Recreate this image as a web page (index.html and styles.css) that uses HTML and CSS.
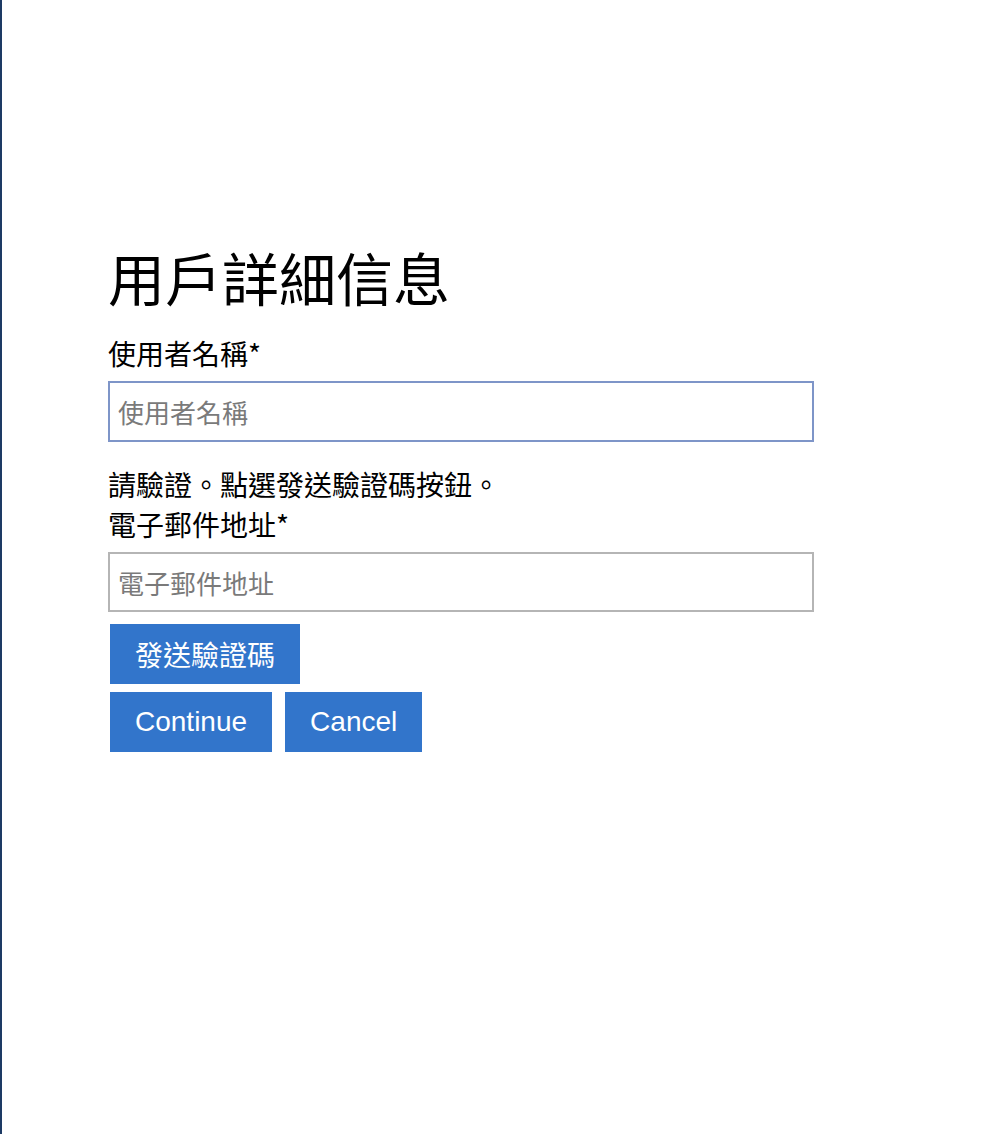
FILE: index.html
```html
<!DOCTYPE html>
<html lang="zh-Hant">
<head>
    <meta charset="UTF-8">
    <meta name="viewport" content="width=device-width, initial-scale=1.0">
    <title>用戶詳細信息</title>
    <link rel="stylesheet" href="styles.css">
</head>
<body>
    <div class="page">
        <form class="user-details" onsubmit="return false;">
            <h1>用戶詳細信息</h1>

            <label for="username">使用者名稱*</label>
            <input type="text" id="username" class="field focused" placeholder="使用者名稱">

            <p class="hint">請驗證。點選發送驗證碼按鈕。</p>
            <label for="email">電子郵件地址*</label>
            <input type="email" id="email" class="field" placeholder="電子郵件地址">

            <div class="actions">
                <button type="button" class="btn">發送驗證碼</button>
            </div>
            <div class="actions">
                <button type="submit" class="btn">Continue</button>
                <button type="button" class="btn">Cancel</button>
            </div>
        </form>
    </div>
</body>
</html>
```

FILE: styles.css
```css
html, body {
    height: 100%;
}
body {
    margin: 0;
    font-family: "Liberation Sans", "Noto Sans CJK TC", sans-serif;
    color: #000;
    background: #fff;
}
.page {
    min-height: 100%;
    box-sizing: border-box;
    border-left: 2px solid #1d3a64;
    padding: 236px 0 0 106px;
}
.user-details {
    width: 706px;
}
h1 {
    margin: 0 0 17px;
    font-family: "Noto Sans CJK TC", sans-serif;
    font-size: 57px;
    font-weight: 400;
    line-height: 80px;
}
label, .hint {
    display: block;
    margin: 0;
    font-family: "Noto Sans CJK TC", sans-serif;
    font-size: 28px;
    font-weight: 400;
    line-height: 40px;
}
.field {
    display: block;
    width: 100%;
    height: 60px;
    box-sizing: border-box;
    margin: 8px 0 0;
    padding: 0 8px;
    border: 2px solid #b5b5b5;
    font-family: "Noto Sans CJK TC", sans-serif;
    font-size: 26px;
    color: #222;
    outline: none;
}
.field::placeholder {
    color: #7a7a7a;
}
.focused {
    height: 61px;
    border-color: #7e95c8;
}
#username {
    margin-bottom: 22px;
}
.actions {
    display: flex;
    gap: 13px;
    margin: 12px 0 0 2px;
}
.actions + .actions {
    margin-top: 8px;
}
.btn {
    height: 60px;
    padding: 0 25px;
    border: none;
    background-color: #3275cb;
    color: #fff;
    font-family: "Liberation Sans", "Noto Sans CJK TC", sans-serif;
    font-size: 28px;
    cursor: pointer;
}
.btn:hover {
    background-color: #2a63ad;
}
```
